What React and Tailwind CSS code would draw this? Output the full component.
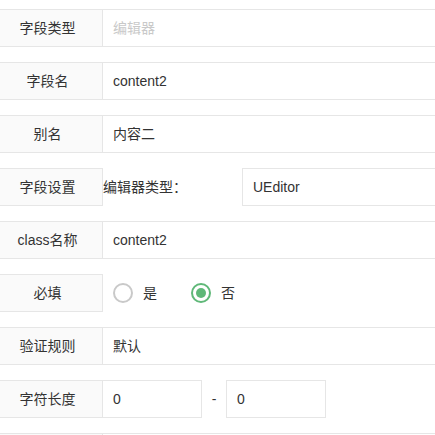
import React from 'react';

const font = { fontFamily: '"Liberation Sans", "Noto Sans CJK SC", sans-serif' };

const Label = ({ children }) => (
    <div className="w-[103px] shrink-0 h-full flex items-center justify-center pr-[7px] bg-[#fafafa] border-y border-r border-[#e6e6e6] text-[#333]">
        {children}
    </div>
);

const Row = ({ children }) => (
    <div className="flex h-[38px] items-stretch">{children}</div>
);

const Value = ({ children, muted }) => (
    <div className={`flex-1 h-full flex items-center pl-[10px] border-y border-[#e6e6e6] ${muted ? 'text-[#c9c9c9]' : 'text-[#333]'}`}>
        {children}
    </div>
);

const Radio = ({ checked, label }) => (
    <div className="flex items-center">
        {checked ? (
            <span className="w-[20px] h-[20px] rounded-full border-2 border-[#5fb878] flex items-center justify-center">
                <span className="w-[10px] h-[10px] rounded-full bg-[#5fb878]" />
            </span>
        ) : (
            <span className="w-[20px] h-[20px] rounded-full border-2 border-[#c9c9c9]" />
        )}
        <span className="ml-[10px] text-[#333]">{label}</span>
    </div>
);

export default function App() {
    return (
        <div className="w-[435px] h-[435px] overflow-hidden bg-white text-[14px] leading-5" style={font}>
            <div className="pt-[9px] flex flex-col gap-[15px]">
                <Row>
                    <Label>字段类型</Label>
                    <Value muted>编辑器</Value>
                </Row>
                <Row>
                    <Label>字段名</Label>
                    <Value>content2</Value>
                </Row>
                <Row>
                    <Label>别名</Label>
                    <Value>内容二</Value>
                </Row>
                <Row>
                    <Label>字段设置</Label>
                    <div className="w-[139px] shrink-0 flex items-center text-[#333]">编辑器类型：</div>
                    <div className="w-[230px] shrink-0 h-full flex items-center pl-[10px] border border-[#e6e6e6] text-[#333]">UEditor</div>
                </Row>
                <Row>
                    <Label>class名称</Label>
                    <Value>content2</Value>
                </Row>
                <Row>
                    <Label>必填</Label>
                    <div className="flex items-center pl-[10px] gap-[34px]">
                        <Radio label="是" />
                        <Radio checked label="否" />
                    </div>
                </Row>
                <Row>
                    <Label>验证规则</Label>
                    <Value>默认</Value>
                </Row>
                <Row>
                    <Label>字符长度</Label>
                    <div className="-ml-px w-[100px] shrink-0 h-full flex items-center pl-[10px] border border-[#e6e6e6] text-[#333]">0</div>
                    <div className="w-[24px] shrink-0 flex items-center justify-center text-[#333]">-</div>
                    <div className="w-[100px] shrink-0 h-full flex items-center pl-[10px] border border-[#e6e6e6] text-[#333]">0</div>
                </Row>
                <Row>
                    <Label>&nbsp;</Label>
                    <Value>&nbsp;</Value>
                </Row>
            </div>
        </div>
    );
}
